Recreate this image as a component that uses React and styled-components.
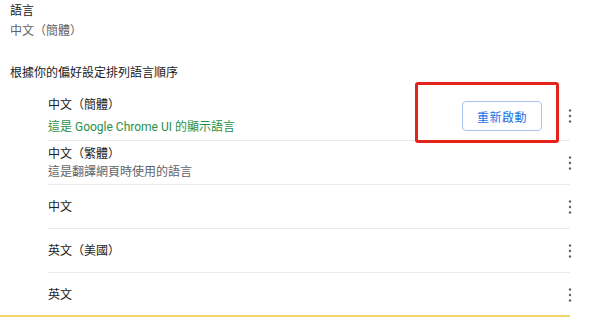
import React from "react";
import styled, { createGlobalStyle } from "styled-components";

const Global = createGlobalStyle`
  html, body { margin: 0; padding: 0; background: #ffffff; }
  body {
    font-family: Roboto, "Noto Sans CJK TC", "Noto Sans", sans-serif;
    font-size: 12px;
    color: #202124;
    text-spacing-trim: space-all;
    -webkit-font-smoothing: antialiased;
  }
`;

const Page = styled.div`
  width: 570px;
  padding-top: 1px;
`;

const Section = styled.div`
  padding-left: 10px;
  display: flex;
  flex-direction: column;
`;

const Title = styled.div`
  line-height: 20px;
  color: #202124;
`;

const SubTitle = styled.div`
  line-height: 20px;
  color: #5f6368;
`;

const Heading = styled.div`
  margin-top: 22px;
  padding-left: 10px;
  line-height: 20px;
  color: #202124;
`;

const List = styled.div`
  margin-top: 10px;
  margin-left: 48px;
  display: flex;
  flex-direction: column;
`;

const Row = styled.div`
  position: relative;
  display: flex;
  align-items: center;
  min-height: 43px;
  padding: ${(p) => (p.$tall ? "1px 0 2px" : "0")};
  border-bottom: ${(p) => (p.$last ? "none" : "1px solid #e8eaed")};
`;

const Texts = styled.div`
  flex: 1;
  display: flex;
  flex-direction: column;
`;

const Primary = styled.div`
  line-height: ${(p) => p.$lh || 18}px;
  color: #202124;
`;

const Secondary = styled.div`
  line-height: ${(p) => p.$lh || 18}px;
  color: ${(p) => (p.$green ? "#2a9146" : "#5f6368")};
`;

const RestartButton = styled.button`
  width: 80px;
  height: 30px;
  margin-right: 20px;
  border: 1px solid #aac4ee;
  border-radius: 4px;
  background: #ffffff;
  color: #1a73e8;
  font-family: Roboto, "Noto Sans CJK TC", sans-serif;
  font-size: 12px;
  letter-spacing: 0.5px;
  padding: 0;
  cursor: pointer;
`;

const More = styled.button`
  width: 16px;
  height: 20px;
  margin-right: -8px;
  border: none;
  background: transparent;
  padding: 0;
  display: flex;
  align-items: center;
  justify-content: center;
  color: #5f6368;
`;

const Highlight = styled.div`
  position: absolute;
  left: 367px;
  top: -11px;
  width: 144px;
  height: 61px;
  box-sizing: border-box;
  border: 3px solid #e5231b;
  border-radius: 3px;
  pointer-events: none;
`;

const YellowRule = styled.div`
  height: 2px;
  width: 570px;
  margin-top: -1px;
  background: #f3d56b;
`;

const Dots = () => (
  <svg width="4" height="16" viewBox="0 0 4 16" aria-hidden="true">
    <circle cx="2" cy="2.5" r="1.2" fill="currentColor" />
    <circle cx="2" cy="8" r="1.2" fill="currentColor" />
    <circle cx="2" cy="13.5" r="1.2" fill="currentColor" />
  </svg>
);

const languages = [
  { name: "中文（簡體）", note: "這是 Google Chrome UI 的顯示語言", green: true, restart: true },
  { name: "中文（繁體）", note: "這是翻譯網頁時使用的語言" },
  { name: "中文" },
  { name: "英文（美國）" },
  { name: "英文" },
];

export default function App() {
  return (
    <Page>
      <Global />
      <Section>
        <Title>語言</Title>
        <SubTitle>中文（簡體）</SubTitle>
      </Section>
      <Heading>根據你的偏好設定排列語言順序</Heading>
      <List>
        {languages.map((l, i) => (
          <Row key={l.name} $tall={l.restart} $last={i === languages.length - 1}>
            <Texts>
              <Primary $lh={l.restart ? 22 : 18}>{l.name}</Primary>
              {l.note && (
                <Secondary $lh={l.restart ? 22 : 18} $green={l.green}>
                  {l.note}
                </Secondary>
              )}
            </Texts>
            {l.restart && <RestartButton>重新啟動</RestartButton>}
            <More aria-label="更多動作">
              <Dots />
            </More>
            {l.restart && <Highlight />}
          </Row>
        ))}
      </List>
      <YellowRule />
    </Page>
  );
}
